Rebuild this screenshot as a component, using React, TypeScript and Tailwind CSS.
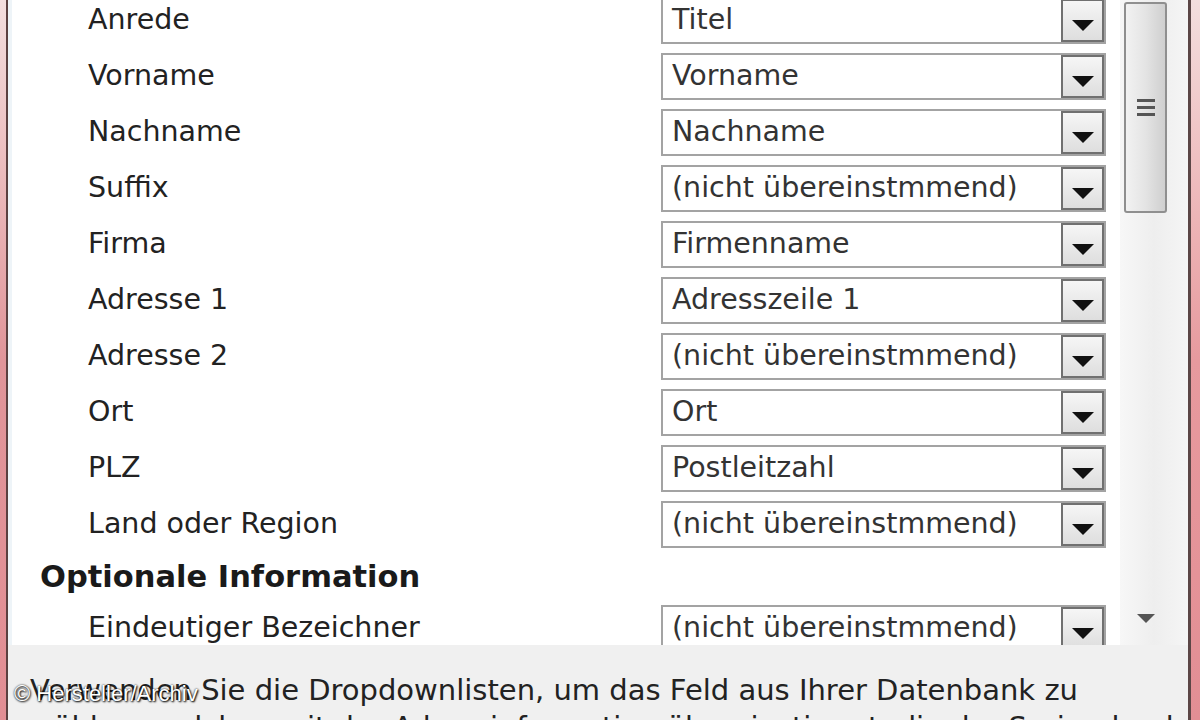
import React from "react";

const fields: [string, string][] = [
  ["Anrede", "Titel"],
  ["Vorname", "Vorname"],
  ["Nachname", "Nachname"],
  ["Suffix", "(nicht übereinstmmend)"],
  ["Firma", "Firmenname"],
  ["Adresse 1", "Adresszeile 1"],
  ["Adresse 2", "(nicht übereinstmmend)"],
  ["Ort", "Ort"],
  ["PLZ", "Postleitzahl"],
  ["Land oder Region", "(nicht übereinstmmend)"],
];

const Combo = ({ value }: { value: string }) => {
  return (
    <div className="flex h-[47px] w-[445px] shrink-0 items-stretch border-2 border-[#a3a3a3] bg-white">
      <span className="flex flex-1 items-center pl-[9px] text-[28.5px] text-[#333]">{value}</span>
      <div className="flex w-[43px] items-end justify-center border-2 border-[#707070] bg-gradient-to-b from-[#f6f6f6] to-[#dedede] pb-[9px]">
        <svg width="22" height="11" viewBox="0 0 22 11">
          <path d="M0 0 L22 0 L11 11 Z" fill="#111" />
        </svg>
      </div>
    </div>
  );
};

const Row = ({ label, value }: { label: string; value: string }) => {
  return (
    <div className="flex items-center">
      <div className="w-[649px] shrink-0 pl-[76px] text-[28.5px] text-[#222]">{label}</div>
      <Combo value={value} />
    </div>
  );
};

export default function App() {
  return (
    <div
      className="relative flex h-[720px] w-[1200px] overflow-hidden bg-[#f0f0f0]"
      style={{ fontFamily: '"DejaVu Sans", Verdana, sans-serif' }}
    >
      {/* window frame, left */}
      <div className="w-[6px] bg-gradient-to-b from-[#f3dede] via-[#e0959a] to-[#e28e94]" />
      <div className="w-[2px] bg-[#5b4040]" />

      <div className="flex w-[1180px] flex-col">
        <div className="flex h-[645px] shrink-0">
          {/* field list, scrolled a little */}
          <div className="w-[1112px] overflow-hidden border-l-4 border-[#eef4f8] bg-white">
            <div className="-mt-[3px] flex flex-col gap-[9px]">
              {fields.map(([l, v], i) => (
                <Row key={i} label={l} value={v} />
              ))}
              <div className="flex h-[39px] items-center pl-[28px] text-[30.5px] font-bold text-[#1a1a1a]">
                Optionale Information
              </div>
              <Row label="Eindeutiger Bezeichner" value="(nicht übereinstmmend)" />
            </div>
          </div>

          {/* scrollbar */}
          <div className="flex w-[68px] flex-col bg-gradient-to-r from-[#f7f7f7] via-[#eeeeee] to-[#f5f5f5] pl-[4px]">
            <div className="mt-[2px] flex h-[211px] w-[43px] items-center justify-center rounded-[3px] border-2 border-[#8f8f8f] bg-gradient-to-r from-[#f2f2f2] via-[#e4e4e4] to-[#cfcfcf]">
              <div className="flex w-[18px] flex-col gap-[4px]">
                <div className="h-[3px] bg-[#555]" />
                <div className="h-[3px] bg-[#555]" />
                <div className="h-[3px] bg-[#555]" />
              </div>
            </div>
            <div className="flex-1" />
            <div className="mb-[22px] flex w-[43px] justify-center">
              <svg width="18" height="9" viewBox="0 0 18 9">
                <path d="M0 0 L18 0 L9 9 Z" fill="#555" />
              </svg>
            </div>
          </div>
        </div>

        {/* description */}
        <div className="flex-1 bg-[#f0f0f0] pl-[22px] pt-[27px] text-[29px] leading-[37px] text-[#222]">
          <div className="whitespace-nowrap">Verwenden Sie die Dropdownlisten, um das Feld aus Ihrer Datenbank zu</div>
          <div className="whitespace-nowrap">wählen, welches mit der Adressinformation übereinstimmt, die der Seriendruck erwartet.</div>
        </div>
      </div>

      {/* window frame, right */}
      <div className="w-[3px] bg-[#5b4646]" />
      <div className="w-[9px] bg-gradient-to-b from-[#f3dede] via-[#e79a9e] to-[#e28e94]" />

      {/* watermark */}
      <div
        className="absolute bottom-[10px] left-[14px] text-[22px] text-white"
        style={{ fontFamily: '"Liberation Sans", Arial, sans-serif', textShadow: "0 0 2px #000, 1px 1px 2px #000" }}
      >
        © Hersteller/Archiv
      </div>
    </div>
  );
}
